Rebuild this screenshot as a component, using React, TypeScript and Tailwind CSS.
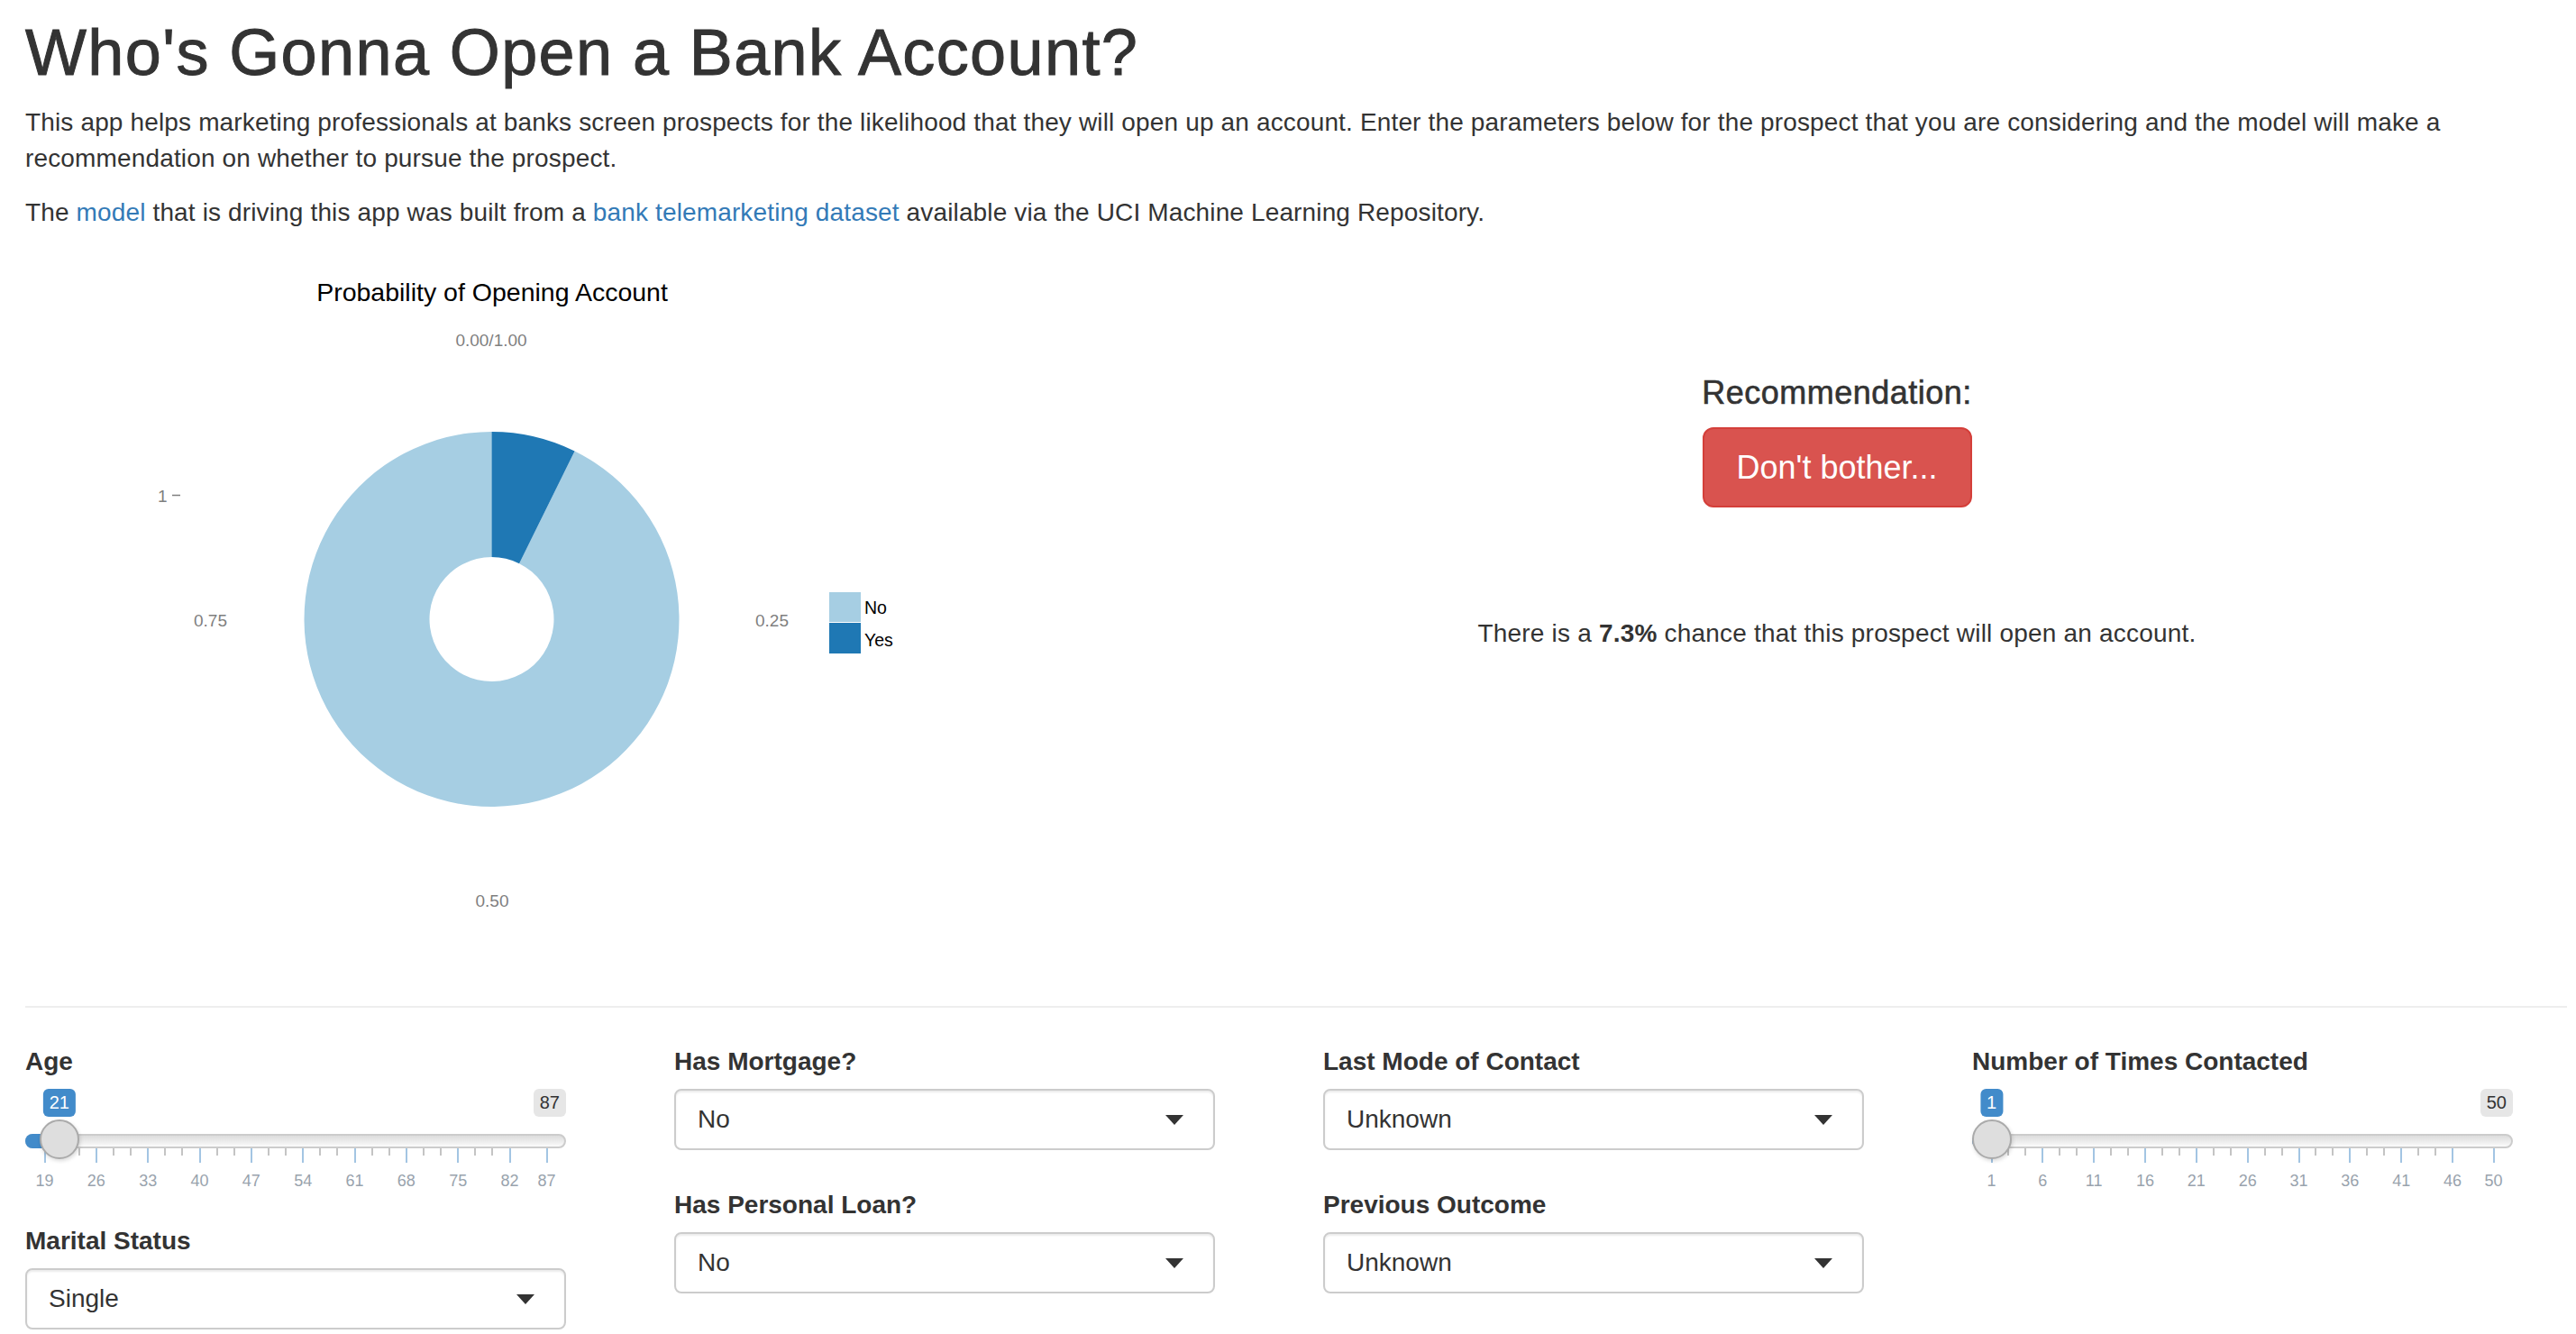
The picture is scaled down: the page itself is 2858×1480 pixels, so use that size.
import React from "react";

const LIGHT = "#a6cee3";
const DARK = "#1f78b4";

const polar = (cx: number, cy: number, r: number, deg: number) => {
  const a = ((deg - 90) * Math.PI) / 180;
  return [cx + r * Math.cos(a), cy + r * Math.sin(a)];
};

// annular sector, angles in degrees clockwise from 12 o'clock
const sector = (cx: number, cy: number, R: number, r: number, a0: number, a1: number) => {
  const large = a1 - a0 > 180 ? 1 : 0;
  const [x0, y0] = polar(cx, cy, R, a0);
  const [x1, y1] = polar(cx, cy, R, a1);
  const [x2, y2] = polar(cx, cy, r, a1);
  const [x3, y3] = polar(cx, cy, r, a0);
  return `M${x0} ${y0} A${R} ${R} 0 ${large} 1 ${x1} ${y1} L${x2} ${y2} A${r} ${r} 0 ${large} 0 ${x3} ${y3} Z`;
};

const DonutChart = ({ p }: { p: number }) => {
  const cx = 545.5;
  const cy = 687;
  const split = p * 360;
  return (
    <svg width={1200} height={800} viewBox="28 276 1200 800" className="block">
      <text x={546} y={334} textAnchor="middle" fontSize={28.5} fill="#000">
        Probability of Opening Account
      </text>
      <g fill="#7f7f7f" fontSize={19}>
        <text x={545} y={383.5} textAnchor="middle">0.00/1.00</text>
        <text x={175} y={557}>1</text>
        <text x={233.5} y={694.5} textAnchor="middle">0.75</text>
        <text x={856.5} y={694.5} textAnchor="middle">0.25</text>
        <text x={546} y={1005.5} textAnchor="middle">0.50</text>
      </g>
      <line x1={191} y1={549.5} x2={200} y2={549.5} stroke="#7f7f7f" strokeWidth={1.5} />
      <path d={sector(cx, cy, 208, 69, split, 360)} fill={LIGHT} />
      <path d={sector(cx, cy, 208, 69, 0, split)} fill={DARK} />
      <rect x={920} y={657} width={35} height={33} fill={LIGHT} />
      <rect x={920} y={691} width={35} height={34} fill={DARK} />
      <g fill="#000" fontSize={19.5}>
        <text x={959} y={681}>No</text>
        <text x={959} y={716.5}>Yes</text>
      </g>
    </svg>
  );
};

const Label = ({ children }: { children: React.ReactNode }) => (
  <div className="mb-[10px] text-[28px] font-bold leading-[40px] text-[#333]">{children}</div>
);

const Select = ({ value }: { value: string }) => (
  <div className="flex h-[68px] w-[600px] items-center justify-between rounded-[8px] border-2 border-[#ccc] bg-white pl-[24px] pr-[33px] text-[28px] leading-[40px] text-[#333] shadow-[inset_0_2px_2px_rgba(0,0,0,0.075)]">
    <span>{value}</span>
    <div className="h-0 w-0 border-x-[10px] border-t-[11px] border-x-transparent border-t-[#333]" />
  </div>
);

const Slider = ({ min, max, value, labels }: { min: number; max: number; value: number; labels: number[] }) => {
  const inset = 21.5;
  const gridW = 557;
  const pos = (v: number) => inset + ((v - min) / (max - min)) * gridW;
  const minors: number[] = [];
  for (let i = 0; i < labels.length - 2; i++) {
    const a = labels[i];
    const b = labels[i + 1];
    minors.push(a + (b - a) / 3, a + ((b - a) * 2) / 3);
  }
  const hx = pos(value);
  return (
    <div className="relative h-[118px] w-[600px]">
      <div className="absolute right-0 top-0 rounded-[6px] bg-[#e6e6e6] px-[7px] py-[2px] text-[20px] leading-[27px] text-[#333]">
        {max}
      </div>
      <div
        className="absolute top-0 -translate-x-1/2 rounded-[6px] bg-[#428bca] px-[7px] py-[2px] text-[20px] leading-[27px] text-white"
        style={{ left: hx }}
      >
        {value}
      </div>
      <div className="absolute left-0 right-0 top-[50px] h-[16px] rounded-full border-2 border-[#ccc] bg-gradient-to-b from-[#dcdcdc] to-[#fbfbfb]" />
      <div className="absolute left-0 top-[50px] h-[16px] rounded-l-full bg-[#428bca]" style={{ width: hx }} />
      {labels.map((v) => (
        <React.Fragment key={v}>
          <div className="absolute top-[66px] h-[16px] w-[2px] bg-[#a3c5e3]" style={{ left: pos(v) - 1 }} />
          <div
            className="absolute top-[92px] -translate-x-1/2 text-[18px] leading-[20px] text-[#99a3ad]"
            style={{ left: pos(v) }}
          >
            {v}
          </div>
        </React.Fragment>
      ))}
      {minors.map((v) => (
        <div key={v} className="absolute top-[66px] h-[8px] w-[2px] bg-[#c4c4c4]" style={{ left: pos(v) - 1 }} />
      ))}
      <div
        className="absolute top-[34px] h-[44px] w-[44px] -translate-x-1/2 rounded-full border-2 border-[#aaa] bg-[#dedede] shadow-[1px_2px_4px_rgba(0,0,0,0.15)]"
        style={{ left: hx }}
      />
    </div>
  );
};

const ageLabels = [19, 26, 33, 40, 47, 54, 61, 68, 75, 82, 87];
const contactLabels = [1, 6, 11, 16, 21, 26, 31, 36, 41, 46, 50];

export default function App() {
  const prob = 0.073;
  return (
    <div className="min-h-screen bg-white pl-[28px] pr-[10px] pt-[19px] font-['Liberation_Sans',Arial,sans-serif] text-[28px] leading-[40px] text-[#333]">
      <h1 className="mb-[18px] text-[72px] font-normal leading-[79px] tracking-[1.4px] [-webkit-text-stroke:1px_#333]">
        Who's Gonna Open a Bank Account?
      </h1>
      <p className="mb-[20px] tracking-[0.15px]">
        This app helps marketing professionals at banks screen prospects for the likelihood that they will open up an
        account. Enter the parameters below for the prospect that you are considering and the model will make a
        <br />
        recommendation on whether to pursue the prospect.
      </p>
      <p className="mb-[20px] tracking-[0.14px]">
        The <a className="text-[#337ab7]">model</a> that is driving this app was built from a{" "}
        <a className="text-[#337ab7]">bank telemarketing dataset</a> available via the UCI Machine Learning Repository.
      </p>

      <div className="flex">
        <div className="w-[1200px] shrink-0">
          <DonutChart p={prob} />
        </div>
        <div className="flex flex-1 flex-col items-center">
          <h4 className="mt-[139.5px] text-[36px] leading-[40px] tracking-[0.5px] [-webkit-text-stroke:0.6px_#333]">
            Recommendation:
          </h4>
          <button className="mt-[18.5px] flex h-[89px] w-[299px] items-center justify-center rounded-[12px] border-2 border-[#d43f3a] bg-[#d9534f] text-[36px] text-white">
            Don't bother...
          </button>
          <p className="mt-[120px] tracking-[0.2px]">
            There is a <b>7.3%</b> chance that this prospect will open an account.
          </p>
        </div>
      </div>

      <div className="mt-[40px] h-[2px] bg-[#eee]" />

      <div className="mt-[40px] grid grid-cols-[720px_720px_720px_720px]">
        <div>
          <Label>Age</Label>
          <Slider min={19} max={87} value={21} labels={ageLabels} />
          <div className="mt-[31px]">
            <Label>Marital Status</Label>
            <Select value="Single" />
          </div>
        </div>
        <div>
          <Label>Has Mortgage?</Label>
          <Select value="No" />
          <div className="mt-[41px]">
            <Label>Has Personal Loan?</Label>
            <Select value="No" />
          </div>
        </div>
        <div>
          <Label>Last Mode of Contact</Label>
          <Select value="Unknown" />
          <div className="mt-[41px]">
            <Label>Previous Outcome</Label>
            <Select value="Unknown" />
          </div>
        </div>
        <div>
          <Label>Number of Times Contacted</Label>
          <Slider min={1} max={50} value={1} labels={contactLabels} />
        </div>
      </div>
    </div>
  );
}
